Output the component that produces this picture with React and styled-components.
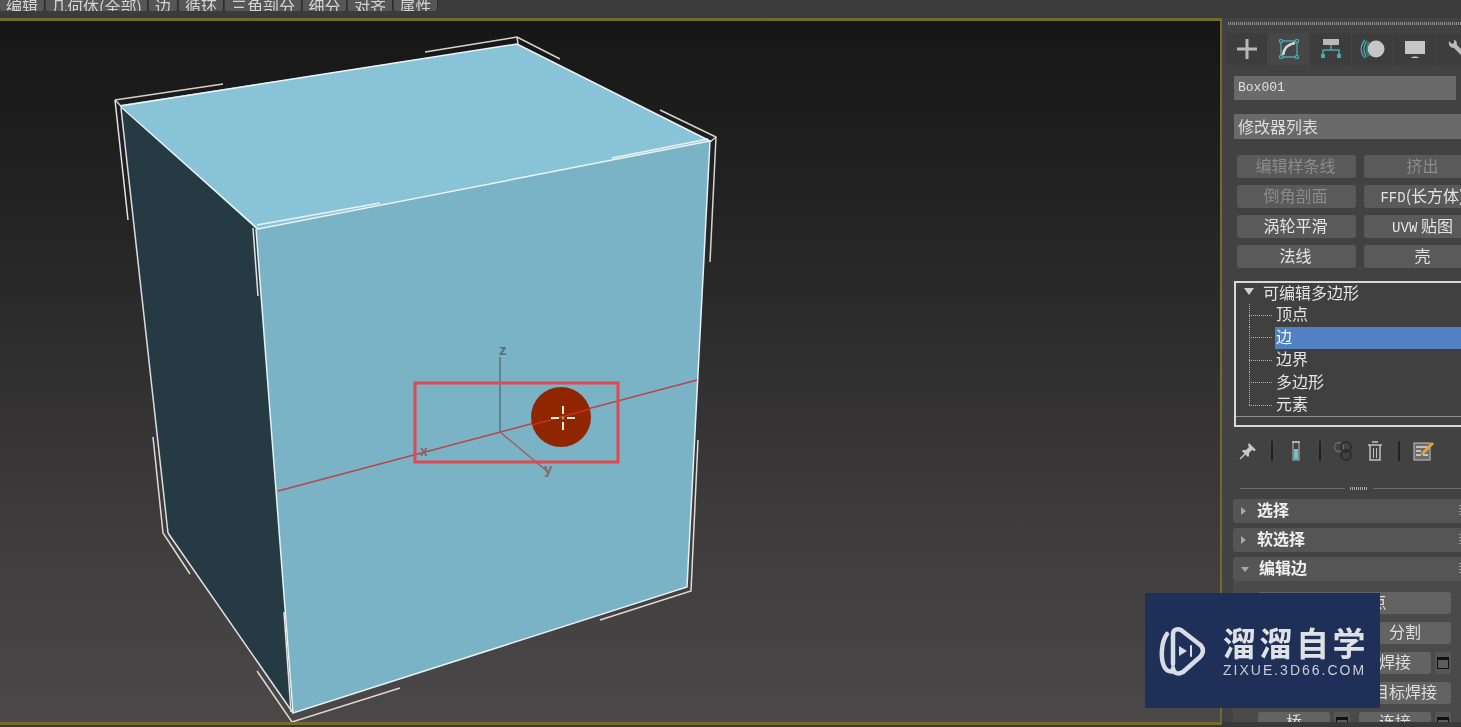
import React from "react";
import styled, { createGlobalStyle } from "styled-components";

const Global = createGlobalStyle`
  html, body { margin: 0; padding: 0; background: #3c3c3c; overflow: hidden; }
  #root { width: 1461px; height: 727px; }
`;
const cjk = `"Noto Sans CJK SC", "Noto Sans", sans-serif`;
const gold = "#73682f";

const Page = styled.div`
  position: relative; width: 1461px; height: 727px; overflow: hidden;
  display: flex; flex-direction: column; background: #3a3a3a; font-family: ${cjk};
`;
const TopBar = styled.div`
  height: 18px; flex: none; display: flex; gap: 2px; background: #3b3b3b; overflow: hidden;
  filter: blur(0.5px);
`;
const TopTab = styled.div`
  width: ${p => p.$w}px; height: 11px; flex: none; background: #565656; border-radius: 0 0 2px 2px;
  box-shadow: 1px 0 0 #2e2e2e; color: #d4d4d4; font-size: 16px; line-height: 12px; text-align: center;
  overflow: hidden; display: flex; align-items: flex-end; justify-content: center;
  & > span { display: block; transform: translateY(1px); white-space: nowrap; }
`;
const Main = styled.div` display: flex; flex: none; height: 707px; `;
const Viewport = styled.div`
  flex: none; width: 1220px; height: 701px;
  border-style: solid; border-color: ${gold}; border-width: 3px 2px 3px 0;
  background: linear-gradient(to bottom, #161616 0%, #2b2a2a 40%, #3f3d3d 75%, #4a4848 100%);
`;
const Scene = styled.svg` display: block; width: 1220px; height: 701px; `;
const Panel = styled.div`
  flex: none; width: 239px; height: 704px; overflow: hidden; background: #424242;
  padding-left: 12px; box-sizing: border-box; display: flex; flex-direction: column;
  filter: blur(0.45px); color: #dcdcdc;
`;
const Grip = styled.div`
  flex: none; width: 240px; height: 3px; margin: 4px 0 0 -6px;
  background: repeating-linear-gradient(to right, #8a8a8a 0 1px, #4a4a4a 1px 2px);
`;
const IconTabs = styled.div` flex: none; display: flex; gap: 1px; margin: 8px 0 0 -8px; width: 250px; `;
const IconTab = styled.div`
  width: 41px; height: 32px; flex: none; display: flex; align-items: center; justify-content: center;
  background: ${p => (p.$active ? "#474747" : "#3d3d3d")};
`;
const NameField = styled.div`
  flex: none; width: 222px; height: 24px; margin-top: 11px; background: #6a6a6a;
  font: 13px/23px "Liberation Mono", monospace; color: #e0e0e0; padding-left: 4px; box-sizing: border-box;
`;
const ModifierField = styled.div`
  flex: none; width: 240px; height: 25px; margin-top: 14px; background: #6a6a6a;
  font-size: 16px; line-height: 25px; color: #dcdcdc; padding-left: 4px; box-sizing: border-box;
`;
const ModGrid = styled.div`
  flex: none; margin: 16px 0 0 3px; display: grid; grid-template-columns: 119px 119px; gap: 7px 8px; width: 246px;
`;
const ModButton = styled.div`
  height: 23px; background: #5a5a5a; border-radius: 3px; text-align: center; font-size: 16px; line-height: 21px;
  white-space: nowrap; overflow: hidden; padding-right: 2px; box-sizing: border-box;
  color: ${p => (p.$off ? "#8b8b8b" : "#e4e4e4")};
  & > i { font: 14px "Liberation Mono", monospace; }
`;
const Stack = styled.div`
  flex: none; width: 240px; height: 146px; margin-top: 13px; box-sizing: border-box;
  border: 2px solid #d9d9d9; background: #404040; display: flex; flex-direction: column;
`;
const StackRoot = styled.div`
  flex: none; height: 21.4px; display: flex; align-items: flex-start; font-size: 16px; line-height: 18px; color: #e4e4e4;
`;
const Caret = styled.span`
  width: 0; height: 0; margin: 5px 9px 0 8px; border-left: 5px solid transparent; border-right: 5px solid transparent;
  border-top: 7px solid #d4d4d4;
`;
const StackRow = styled.div` flex: none; height: 22.4px; display: flex; margin-left: 13px; `;
const Stub = styled.div`
  width: 26px; flex: none;
  background:
    repeating-linear-gradient(to bottom, #b0b0b0 0 1px, transparent 1px 2px) left top / 1px ${p => (p.$last ? "50%" : "100%")} no-repeat,
    repeating-linear-gradient(to right, #b0b0b0 0 1px, transparent 1px 2px) left center / 24px 1px no-repeat;
`;
const StackLabel = styled.div`
  flex: 1; font-size: 16px; line-height: 19px; padding-left: 1px;
  background: ${p => (p.$sel ? "#5181c2" : "transparent")};
  color: ${p => (p.$sel ? "#f2f6fb" : "#e4e4e4")};
`;
const StackRule = styled.div` flex: none; height: 1px; margin-top: 0; background: #8e8e8e; `;
const ToolRow = styled.div` flex: none; height: 28px; margin: 10px 0 0 2px; display: flex; align-items: center; `;
const ToolSlot = styled.div`
  width: 24px; flex: none; display: flex; justify-content: center; margin-left: ${p => p.$gap || 0}px;
`;
const ToolSep = styled.div` width: 2px; height: 20px; background: #222; `;
const Divider = styled.div`
  flex: none; margin: 22px 0 0 6px; width: 221px; height: 3px; display: flex; align-items: center; gap: 5px;
  & > b { flex: 1; height: 1px; background: #6c6c6c; }
  & > b:first-child { flex: 0 0 105px; }
  & > span { width: 18px; height: 3px; background: repeating-linear-gradient(to right, #a8a8a8 0 1px, transparent 1px 2px); }
`;
const Rollouts = styled.div` flex: none; margin: 9px 0 0 -1px; width: 240px; display: flex; flex-direction: column; gap: 5px; `;
const Rollout = styled.div`
  flex: none; height: 24px; background: #555; border-radius: 3px 0 0 3px; display: flex; align-items: center;
  font-weight: 700; font-size: 16px; line-height: 20px; color: #f0f0f0; position: relative;
  & > em { font-style: normal; transform: translateY(-2px); }
  &::after { content: ""; position: absolute; left: 226px; top: 6px; width: 2px; height: 12px;
    background: repeating-linear-gradient(to bottom, #999 0 1px, transparent 1px 3px); }
`;
const Arrow = styled.span`
  width: 0; height: 0; margin: 0 ${p => (p.$open ? 10 : 11)}px 0 8px;
  ${p => p.$open
    ? "border-left: 4px solid transparent; border-right: 4px solid transparent; border-top: 5px solid #a8a8a8;"
    : "border-top: 4px solid transparent; border-bottom: 4px solid transparent; border-left: 5px solid #a8a8a8;"}
`;
const RolloutBody = styled.div`
  flex: none; margin: -5px 0 0 0; padding: 11px 0 0 25px; height: 141px; box-sizing: border-box; background: #4a4a4a;
  display: flex; flex-direction: column; gap: 8px; overflow: hidden;
`;
const EdgeRow = styled.div` flex: none; display: flex; gap: ${p => p.$gap || 4}px; height: 22px; `;
const EdgeGroup = styled.div` flex: none; width: ${p => p.$w}px; display: flex; gap: 4px; justify-content: space-between; `;
const EdgeButton = styled.div`
  flex: 1; height: 22px; background: #636363; border-radius: 3px; text-align: center;
  font-size: 16px; line-height: 19px; color: #dedede; white-space: nowrap;
`;
const Settings = styled.div`
  width: 16px; height: 22px; flex: none; background: #565656; border-radius: 2px; display: flex; align-items: center; justify-content: center;
  & > span { width: 12px; height: 12px; border: 1.5px solid #111; border-top-width: 3px; box-sizing: border-box; background: #5c5c5c; }
`;
const BottomBand = styled.div` flex: 1; background: #383838; `;
const Watermark = styled.div`
  position: absolute; left: 1145px; top: 593px; width: 235px; height: 115px; background: #1f3058;
  display: flex; align-items: center; padding-left: 13px; box-sizing: border-box; gap: 17px; color: #d9dce4;
  filter: blur(0.3px);
`;
const BrandText = styled.div` display: flex; flex-direction: column; `;
const BrandName = styled.div`
  font-size: 33px; font-weight: 700; line-height: 38px; letter-spacing: 3.5px; white-space: nowrap; color: #dfe1e7;
`;
const BrandUrl = styled.div`
  font: 14px/16px "Liberation Sans", sans-serif; letter-spacing: 2px; margin-top: 1px; white-space: nowrap; color: #c9ccd6;
`;

const L = ({ d, c = "#e8e8e8", w = 1.5 }) => <path d={d} stroke={c} strokeWidth={w} fill="none" />;
const teal = "#4ba8ad";
const gr = "#b9b9b9";

const Box3D = () => (
  <Scene viewBox="0 21 1220 701">
    <polygon points="120,105 256,229 293,713 168,533" fill="#263a43" />
    <polygon points="120,105 517,44 710,141 256,229" fill="#88c3d8" />
    <polygon points="256,229 710,141 687,587 293,713" fill="#7ab2c6" />
    <L d="M120,106 L517,44 L710,141 L258,229 L120,106" c="#eef5f7" />
    <L d="M256,229 L293,713 L687,587 L710,141" c="#e6f1f4" />
    <L d="M121,108 L168,533" c="#dcdcdc" />
    <L d="M168,533 L293,713" c="#dfe5e6" />
    <L d="M115,100 L223,84" c="#d6cfc9" />
    <L d="M115,100 L128,220" c="#e2e2e2" />
    <L d="M153,437 L163,533 L190,574" c="#dedad6" />
    <L d="M257,671 L292,722 L400,688" c="#ded6d0" />
    <L d="M600,620 L691,591 L698,440" c="#e2dad6" />
    <L d="M660,110 L716,137 L710,262" c="#d8d3cd" />
    <L d="M425,52 L517,37 L560,59" c="#d8d3cd" />
    <L d="M517,37 L518,44" c="#d8d3cd" />
    <L d="M115,100 L121,106" c="#d8d3cd" />
    <L d="M716,137 L710,142" c="#d8d3cd" />
    <L d="M257,225 L380,203" c="#e8f2f5" />
    <L d="M612,158 L708,139" c="#e8f2f5" />
    <L d="M253,228 L258,296" c="#e2e2e2" />
    <L d="M284,612 L291,712" c="#e2e2e2" />
    <L d="M278,491 L697,380" c="#b7444b" w={1.4} />
    <L d="M500,432 L500,357" c="#56707c" w={1.4} />
    <L d="M500,432 L548,472" c="#a25a60" w={1.4} />
    <text x="499" y="355" fontFamily="Liberation Sans, sans-serif" fontSize="15" fontWeight="700" fill="#5a6f79">z</text>
    <text x="420" y="456" fontFamily="Liberation Sans, sans-serif" fontSize="14" fontWeight="700" fill="#8a6468">x</text>
    <text x="544" y="474" fontFamily="Liberation Sans, sans-serif" fontSize="15" fontWeight="700" fill="#8a6468">y</text>
    <rect x="415" y="383" width="203" height="79" fill="none" stroke="#de4a50" strokeWidth="3" />
    <circle cx="561" cy="417" r="30" fill="#8f2600" />
    <L d="M532,425 L590,409" c="#cf2d14" w={1.8} />
    <L d="M551,418 L559,418 M567,418 L575,418 M563,406 L563,414 M563,422 L563,430" c="#f2eee2" w={2} />
    <circle cx="563" cy="418" r="1.4" fill="#6dbb4c" />
  </Scene>
);

const Ico = styled.svg` display: block; `;
const IconAdd = () => (
  <Ico width="24" height="24" viewBox="0 0 24 24"><path d="M12 2v20M2 12h20" stroke={gr} strokeWidth="3" /></Ico>
);
const IconModify = () => (
  <Ico width="24" height="24" viewBox="0 0 24 24" fill="none">
    <path d="M5 4h14M5 20h14M4 5v14M20 5v14" stroke={teal} strokeWidth="1.3" />
    <path d="M2.5 2.5h3v3h-3zM18.500 2.500h3v3h-3zM2.500 18.500h3v3h-3zM18.500 18.500h3v3h-3z" fill="#2f6a70" stroke={teal} />
    <path d="M6 18C7 11 11 7 18 6" stroke="#d8d8d8" strokeWidth="2.6" />
  </Ico>
);
const IconHierarchy = () => (
  <Ico width="24" height="24" viewBox="0 0 24 24" fill="none">
    <rect x="4" y="2" width="16" height="6" fill={gr} />
    <path d="M12 8v5M4 17v-4h16v4" stroke={teal} strokeWidth="1.5" />
    <rect x="2" y="17" width="4" height="4" fill={teal} /><rect x="18" y="17" width="4" height="4" fill={teal} />
  </Ico>
);
const IconMotion = () => (
  <Ico width="26" height="24" viewBox="0 0 26 24" fill="none">
    <circle cx="16" cy="12" r="8.500" fill="#c6c6c6" />
    <path d="M7 4C3 8 3 16 7 20M5 3C0 8 0 16 5 21" stroke={teal} strokeWidth="1.3" />
    <path d="M9 5C6 9 6 15 9 19" stroke="#3d7c80" strokeWidth="2" />
  </Ico>
);
const IconDisplay = () => (
  <Ico width="24" height="24" viewBox="0 0 24 24" fill="none">
    <rect x="2" y="4" width="20" height="13" fill="#c6c6c6" /><path d="M8 21c1-2 7-2 8 0z" fill="#c6c6c6" />
  </Ico>
);
const IconWrench = () => (
  <Ico width="24" height="24" viewBox="0 0 24 24" fill="none">
    <path d="M4 4l3 3 2-1 0-3C12 3 12 7 12 8l10 10-3 3-10-10C7 11 3 10 4 4z" fill="#bbb" />
  </Ico>
);
const IconPin = () => (
  <Ico width="20" height="20" viewBox="0 0 20 20" fill="none">
    <path d="M11 2l7 7-2 1-2-1-3 3 0 3-1 1-6-6 1-1 3 0 3-3-1-2z" fill="#c8c8c8" /><path d="M7 13L2 18" stroke="#c8c8c8" strokeWidth="1.5" />
  </Ico>
);
const IconTube = () => (
  <Ico width="12" height="22" viewBox="0 0 12 22" fill="none">
    <path d="M2 2h8" stroke="#ccc" strokeWidth="1.500" /><rect x="3" y="2" width="6" height="18" stroke="#bbb" /><rect x="4" y="9" width="4" height="10" fill="#6cc4c8" />
  </Ico>
);
const IconCircles = () => (
  <Ico width="24" height="22" viewBox="0 0 24 22" fill="none">
    <circle cx="7" cy="7" r="4.500" stroke="#6b6b6b" strokeWidth="1.500" /><circle cx="14" cy="7" r="5" stroke="#2e2e2e" strokeWidth="2" /><circle cx="14" cy="15" r="5" stroke="#2e2e2e" strokeWidth="2" />
  </Ico>
);
const IconTrash = () => (
  <Ico width="16" height="22" viewBox="0 0 16 22" fill="none" stroke="#c0c0c0">
    <path d="M5 2h6M1 5h14" strokeWidth="1.500" /><path d="M3 5v15h10V5" strokeWidth="1.500" /><path d="M6.500 8v10M9.500 8v10" />
  </Ico>
);
const IconConfig = () => (
  <Ico width="22" height="22" viewBox="0 0 22 22" fill="none">
    <rect x="2" y="3" width="16" height="17" fill="#6b6b6b" stroke="#c4c4c4" />
    <path d="M4 7h12M4 11h5M4 15h5M11 15h5" stroke="#ddd" strokeWidth="1.500" />
    <path d="M10 12L20 2l2 2-10 10-3 1z" fill="#e7a52a" />
  </Ico>
);
const Logo = () => (
  <Ico width="48" height="50" viewBox="0 0 48 50" fill="none" stroke="#d9dce4" strokeWidth="4.500" strokeLinecap="round" strokeLinejoin="round">
    <path d="M9 8C3 16 2 34 7 42c2 3 6 4 9 3" />
    <path d="M15 38V8c0-4 4-6 8-4l18 14c5 3 5 9 1 13L25 46c-5 3-10 1-10-4" />
    <path d="M21 20l8 5-8 5z" fill="#d9dce4" stroke="none" />
    <path d="M33 20v10" strokeWidth="2" />
  </Ico>
);

const topTabs = [[44, "编辑"], [101, "几何体(全部)"], [28, "边"], [44, "循环"], [76, "三角剖分"], [43, "细分"], [44, "对齐"], [43, "属性"]];
const mods = [
  ["编辑样条线", true], ["挤出", true], ["倒角剖面", true], [<><i>FFD</i>(长方体)</>, false],
  ["涡轮平滑", false], [<><i>UVW</i> 贴图</>, false], ["法线", false], ["壳", false],
];
const sub = ["顶点", "边", "边界", "多边形", "元素"];

export default function App() {
  return (
    <Page>
      <Global />
      <TopBar>
        {topTabs.map(([w, t]) => <TopTab key={t} $w={w}><span>{t}</span></TopTab>)}
      </TopBar>
      <Main>
        <Viewport><Box3D /></Viewport>
        <Panel>
          <Grip />
          <IconTabs>
            <IconTab><IconAdd /></IconTab>
            <IconTab $active><IconModify /></IconTab>
            <IconTab><IconHierarchy /></IconTab>
            <IconTab><IconMotion /></IconTab>
            <IconTab><IconDisplay /></IconTab>
            <IconTab><IconWrench /></IconTab>
          </IconTabs>
          <NameField>Box001</NameField>
          <ModifierField>修改器列表</ModifierField>
          <ModGrid>
            {mods.map(([t, off], i) => <ModButton key={i} $off={off}>{t}</ModButton>)}
          </ModGrid>
          <Stack>
            <StackRoot><Caret />可编辑多边形</StackRoot>
            {sub.map((s, i) => (
              <StackRow key={s}>
                <Stub $last={i === sub.length - 1} />
                <StackLabel $sel={s === "边"}>{s}</StackLabel>
              </StackRow>
            ))}
            <StackRule />
          </Stack>
          <ToolRow>
            <ToolSlot><IconPin /></ToolSlot>
            <ToolSlot><ToolSep /></ToolSlot>
            <ToolSlot><IconTube /></ToolSlot>
            <ToolSlot><ToolSep /></ToolSlot>
            <ToolSlot><IconCircles /></ToolSlot>
            <ToolSlot $gap={7}><IconTrash /></ToolSlot>
            <ToolSlot><ToolSep /></ToolSlot>
            <ToolSlot><IconConfig /></ToolSlot>
          </ToolRow>
          <Divider><b /><span /><b /></Divider>
          <Rollouts>
            <Rollout><Arrow /><em>选择</em></Rollout>
            <Rollout><Arrow /><em>软选择</em></Rollout>
            <Rollout><Arrow $open /><em>编辑边</em></Rollout>
            <RolloutBody>
              <EdgeRow><EdgeGroup $w={193}><EdgeButton>插入顶点</EdgeButton></EdgeGroup></EdgeRow>
              <EdgeRow>
                <EdgeGroup $w={97}><EdgeButton /></EdgeGroup>
                <EdgeGroup $w={92}><EdgeButton>分割</EdgeButton></EdgeGroup>
              </EdgeRow>
              <EdgeRow>
                <EdgeGroup $w={97}><EdgeButton /></EdgeGroup>
                <EdgeGroup $w={92}><EdgeButton>焊接</EdgeButton><Settings><span /></Settings></EdgeGroup>
              </EdgeRow>
              <EdgeRow>
                <EdgeGroup $w={97}><EdgeButton /></EdgeGroup>
                <EdgeGroup $w={92}><EdgeButton>目标焊接</EdgeButton></EdgeGroup>
              </EdgeRow>
              <EdgeRow $gap={9}>
                <EdgeGroup $w={92}><EdgeButton>桥</EdgeButton><Settings><span /></Settings></EdgeGroup>
                <EdgeGroup $w={92}><EdgeButton>连接</EdgeButton><Settings><span /></Settings></EdgeGroup>
              </EdgeRow>
            </RolloutBody>
          </Rollouts>
        </Panel>
      </Main>
      <BottomBand />
      <Watermark>
        <Logo />
        <BrandText>
          <BrandName>溜溜自学</BrandName>
          <BrandUrl>ZIXUE.3D66.COM</BrandUrl>
        </BrandText>
      </Watermark>
    </Page>
  );
}
